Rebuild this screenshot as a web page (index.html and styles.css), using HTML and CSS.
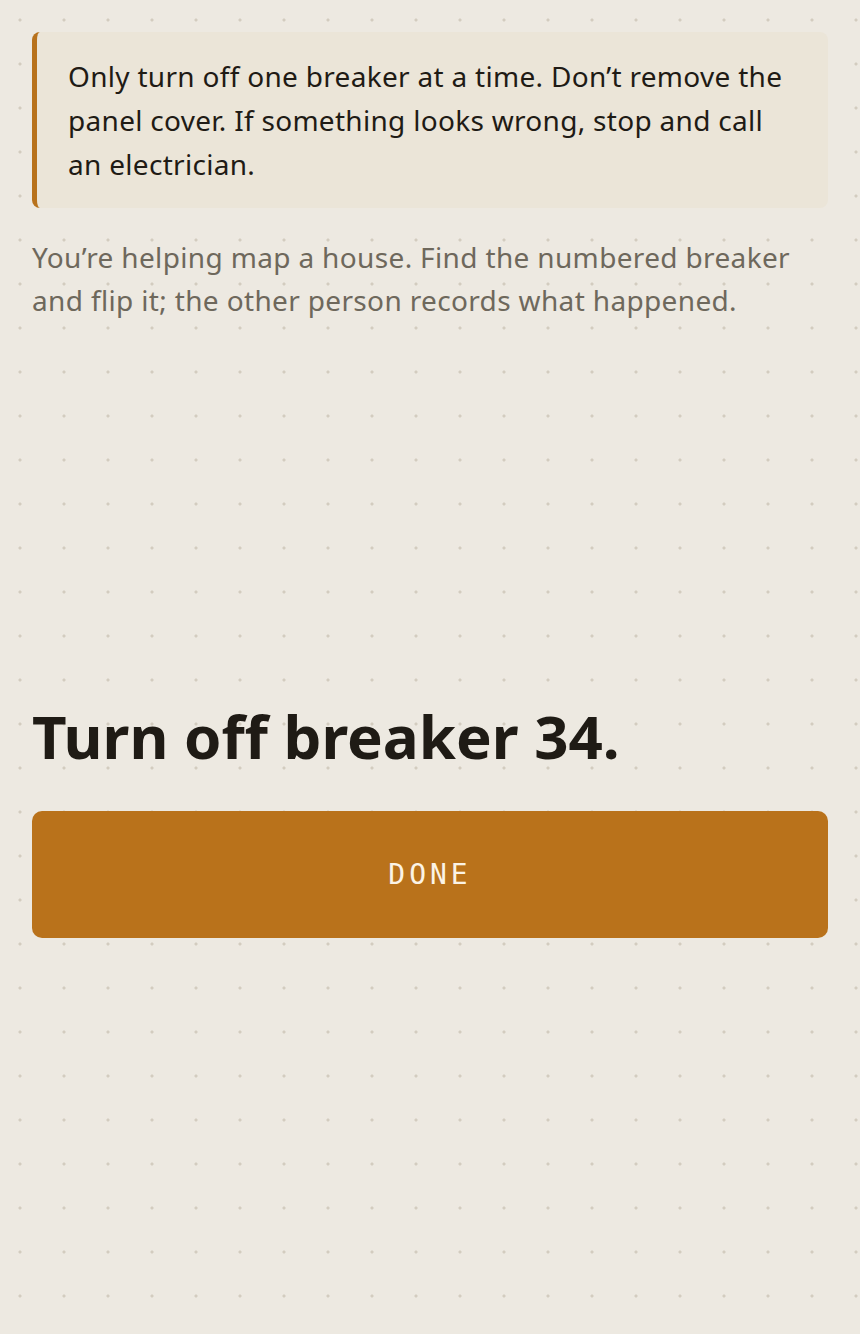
FILE: index.html
```html
<!DOCTYPE html>
<html lang="en">
<head>
<meta charset="utf-8">
<title>Breaker</title>
<link rel="stylesheet" href="styles.css">
</head>
<body>
<main class="page">
  <aside class="callout">Only turn off one breaker at a time. Don’t remove the panel cover. If something looks wrong, stop and call an electrician.</aside>
  <p class="intro">You’re helping map a house. Find the numbered breaker and flip it; the other person records what happened.</p>
  <section class="stage">
    <h1 class="instruction">Turn off breaker 34.</h1>
    <button class="done" type="button">DONE</button>
  </section>
</main>
</body>
</html>
```
FILE: styles.css
```css
html, body {
  margin: 0;
  padding: 0;
}
body {
  background-color: #ede9e1;
  background-image: radial-gradient(circle at 20px 20px, #d3ccbf 0, #d3ccbf 1.2px, transparent 1.9px);
  background-size: 44px 44px;
  min-height: 1334px;
  font-family: "Noto Sans", "Open Sans", sans-serif;
  color: #1f1b15;
}
.page {
  padding: 32px;
  display: flex;
  flex-direction: column;
}
.callout {
  background: #ebe5d8;
  border-left: 5px solid #b8721c;
  border-radius: 8px;
  padding: 22px 40px 22px 31px;
  font-size: 28px;
  line-height: 44px;
  letter-spacing: 0.3px;
  color: #1f1b15;
}
.intro {
  margin: 28px 0 0;
  font-size: 28px;
  line-height: 43px;
  letter-spacing: 0.35px;
  color: #6e685c;
}
.stage {
  margin-top: 376px;
  display: flex;
  flex-direction: column;
}
.instruction {
  margin: 0;
  font-size: 60px;
  line-height: 76px;
  font-weight: 700;
  color: #1f1b15;
}
.done {
  margin-top: 37px;
  height: 127px;
  border: none;
  border-radius: 10px;
  background: #b9721b;
  color: #fbf3e6;
  font-family: "DejaVu Sans Mono", "Liberation Mono", monospace;
  font-size: 28px;
  letter-spacing: 4px;
}
```
